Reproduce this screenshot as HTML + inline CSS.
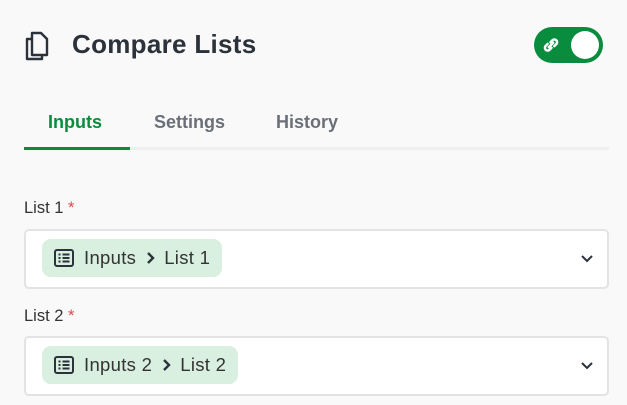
<!DOCTYPE html>
<html><head><style>
body{margin:0;width:627px;height:405px;background:#f9f9f9;font-family:"Liberation Sans",sans-serif;position:relative;overflow:hidden;color:#2f3640}
.abs{position:absolute}
.title{left:72px;top:29px;font-size:26px;font-weight:bold;color:#2b323b;letter-spacing:0.3px}
.toggle{left:534px;top:27px;width:69px;height:36px;border-radius:18px;background:#0a8c3e}
.knob{position:absolute;right:4px;top:4px;width:28px;height:28px;border-radius:50%;background:#fff}
.tab{top:112px;font-size:18px;font-weight:bold;color:#6b6f78}
.line{left:24px;top:147px;width:585px;height:3px;background:#efefef}
.act{left:24px;top:147px;width:106px;height:3px;background:#0a8c3e}
.lab{left:24px;font-size:16.5px;color:#333}
.lab span{color:#e04848}
.box{left:24px;width:581px;height:56px;border:2px solid #e3e3e3;border-radius:5px;background:#fff}
.chip{position:absolute;left:16px;top:8px;height:38px;border-radius:9px;background:#d9efe0;font-size:18.5px;color:#333;display:flex;align-items:center;padding:0 12px 0 12px;letter-spacing:0.3px}
.chev{position:absolute;right:14px;top:24px}
</style></head><body>
<svg class="abs" style="left:24px;top:31px" width="26" height="30" viewBox="0 0 26 30"><path d="M8 2h9l6 6v16H8z" fill="none" stroke="#2b323b" stroke-width="2.4" stroke-linejoin="round"/><path d="M8 8H3v20h15v-4" fill="none" stroke="#2b323b" stroke-width="2.4" stroke-linejoin="round"/></svg>
<div class="abs title">Compare Lists</div>
<div class="abs toggle"><svg class="abs" style="left:7px;top:8px" width="20" height="20" viewBox="0 0 18 18"><path d="M7 11l4-4M6 8l-2 2a2.5 2.5 0 0 0 3.5 3.5l2-2M12 10l2-2a2.5 2.5 0 0 0-3.5-3.5l-2 2" fill="none" stroke="#fff" stroke-width="2.2" stroke-linecap="round"/></svg><div class="knob"></div></div>
<div class="abs tab" style="left:48px;color:#0a8c3e">Inputs</div>
<div class="abs tab" style="left:154px">Settings</div>
<div class="abs tab" style="left:276px">History</div>
<div class="abs line"></div><div class="abs act"></div>
<div class="abs lab" style="top:199px">List 1 <span>*</span></div>
<div class="abs box" style="top:229px"><div class="chip"><svg width="20" height="18" viewBox="0 0 20 18" style="margin-right:10px"><rect x="1" y="1" width="18" height="16" rx="2" fill="none" stroke="#2b323b" stroke-width="2"/><path d="M4.5 5.5h2M8.5 5.5h7M4.5 9h2M8.5 9h7M4.5 12.5h2M8.5 12.5h7" stroke="#2b323b" stroke-width="2"/></svg>Inputs<svg width="10" height="14" viewBox="0 0 10 14" style="margin:0 9px"><path d="M3 2l5 5-5 5" fill="none" stroke="#2b323b" stroke-width="2.4"/></svg>List 1</div><svg class="chev" width="12" height="8" viewBox="0 0 12 8"><path d="M1 1l5 5 5-5" fill="none" stroke="#2b323b" stroke-width="2"/></svg></div>
<div class="abs lab" style="top:307px">List 2 <span>*</span></div>
<div class="abs box" style="top:336px"><div class="chip"><svg width="20" height="18" viewBox="0 0 20 18" style="margin-right:10px"><rect x="1" y="1" width="18" height="16" rx="2" fill="none" stroke="#2b323b" stroke-width="2"/><path d="M4.5 5.5h2M8.5 5.5h7M4.5 9h2M8.5 9h7M4.5 12.5h2M8.5 12.5h7" stroke="#2b323b" stroke-width="2"/></svg>Inputs 2<svg width="10" height="14" viewBox="0 0 10 14" style="margin:0 9px"><path d="M3 2l5 5-5 5" fill="none" stroke="#2b323b" stroke-width="2.4"/></svg>List 2</div><svg class="chev" width="12" height="8" viewBox="0 0 12 8"><path d="M1 1l5 5 5-5" fill="none" stroke="#2b323b" stroke-width="2"/></svg></div>
</body></html>
